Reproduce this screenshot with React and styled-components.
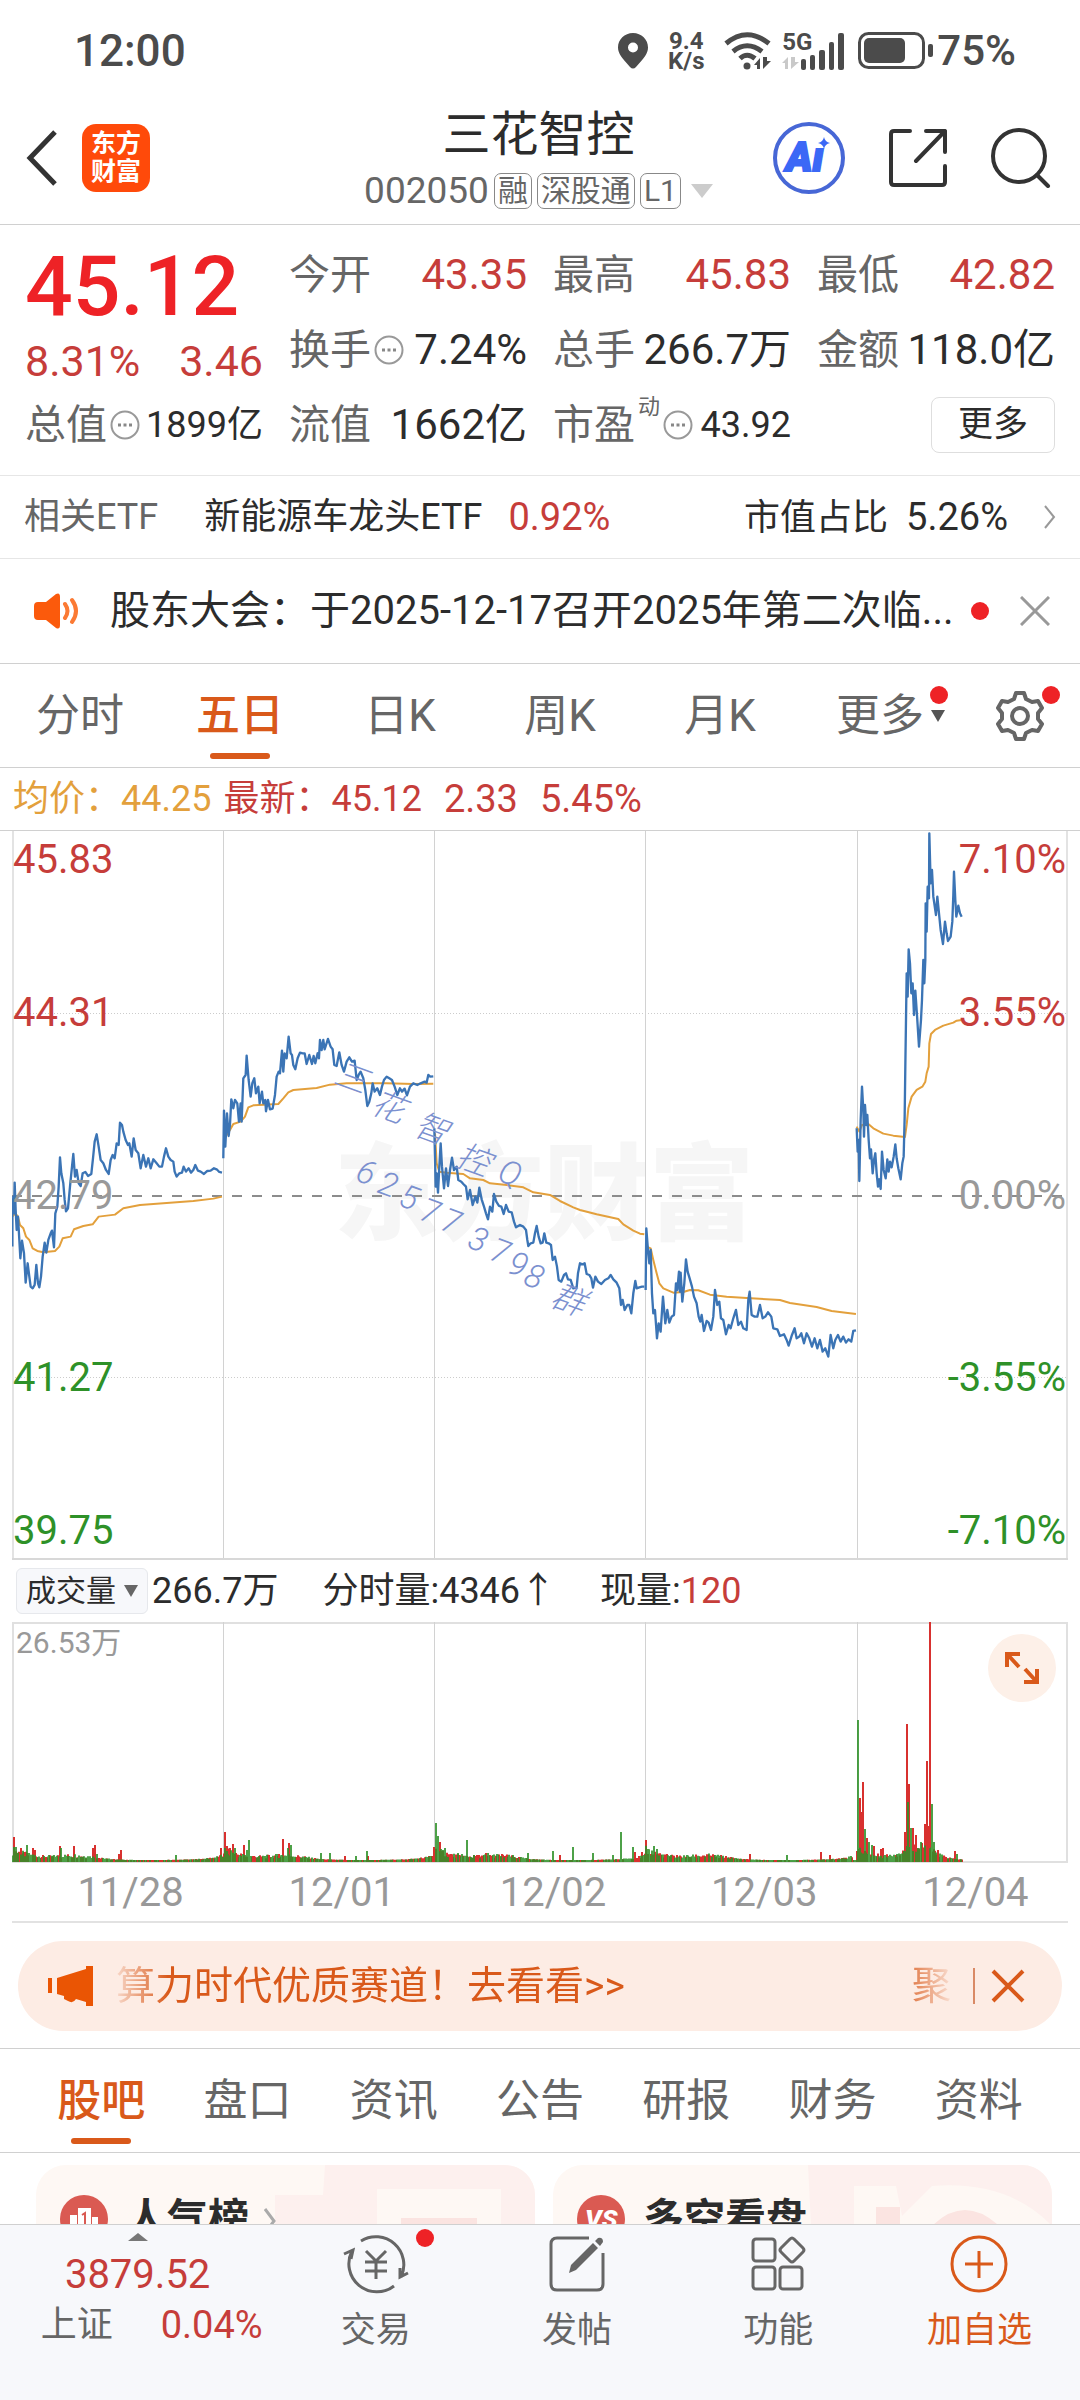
import React, { useState } from 'react'
import styled, { createGlobalStyle } from 'styled-components'

const c = {
    red: '#c63d3a',
    bright: '#ee2226',
    green: '#2e9128',
    orange: '#d9591a',
    avg: '#e3a03c',
    ink: '#2c2c2c',
    grey: '#666666',
    pale: '#999999',
    line: '#d0d0d0',
    bar: '#f7f8fb',
}

const quotes = [
    { label: '今开', value: '43.35', color: c.red },
    { label: '最高', value: '45.83', color: c.red },
    { label: '最低', value: '42.82', color: c.red },
    { label: '换手', value: '7.24%', info: true },
    { label: '总手', value: '266.7万' },
    { label: '金额', value: '118.0亿' },
    { label: '流值', value: '1662亿' },
    { label: '市盈', value: '43.92', info: true, sup: '动', small: true },
]

const periods = ['分时', '五日', '日K', '周K', '月K', '更多']
const sections = ['股吧', '盘口', '资讯', '公告', '研报', '财务', '资料']
const dates = ['11/28', '12/01', '12/02', '12/03', '12/04']

const prices = [
    { top: '4%', left: '45.83', right: '7.10%', color: c.red },
    { top: '25%', left: '44.31', right: '3.55%', color: c.red },
    { top: '50%', left: '42.79', right: '0.00%', color: c.pale },
    { top: '75%', left: '41.27', right: '-3.55%', color: c.green },
    { top: '96%', left: '39.75', right: '-7.10%', color: c.green },
]

// points are kept at three times the chart scale, x and y from each group's own origin
const trends = [
    {
        at: 'translate(-12 -11)',
        price: [
            '37,1280 37,1180 40,1130 42,1180 44,1088 47,1170 50,1230 54,1190 58,1260 61,1315 66,1262 72,1300 77,1388 83,1330 88,1370 92,1400 98,1405 104,1395 109,1335 114,1390 118,1402 123,1370 128,1310 134,1268 139,1298 145,1260 152,1240 156,1232 162,1282 166,1180 172,1160 176,1100 180,1012 184,1060 190,1090 194,1140 198,1174 204,1165 210,1100 216,1040 220,1002 225,1070 230,1050 236,1090 242,1098 248,1060 256,1056 264,1068 274,1062 279,1015 284,965 290,943 296,980 302,1020 310,1030 318,1050 326,1062 332,1020 338,1005 344,1015 350,970 356,975 360,908 366,915 370,935 377,960 384,975 388,970 395,1010 401,955 407,990 415,1000 422,1045 430,1005 438,1040 445,1015 452,1045 460,1018 470,1030 478,1040 486,1040 492,1010 498,985 505,1010 512,1020 520,1025 524,1055 530,1070 538,1060 546,1058 551,1040 558,1055 566,1045 573,1058 580,1050 586,1035 594,1052 602,1055 612,1062 622,1053 632,1052 642,1045 650,1048 658,1056 666,1058',
            '670,1015 672,872 676,980 681,880 686,948 690,915 694,838 700,865 705,840 712,850 717,905 722,850 725,905 730,775 737,765 740,707 746,780 752,830 757,790 763,775 768,820 775,800 779,850 786,815 790,850 796,840 798,874 804,840 810,868 818,866 825,825 830,770 836,755 840,760 846,692 850,755 854,700 860,715 866,650 872,700 876,705 880,735 886,748 893,715 900,698 908,700 914,700 920,732 928,705 936,732 941,708 946,730 953,700 957,715 960,660 965,690 970,660 974,688 984,657 992,680 998,688 1003,735 1010,738 1018,697 1025,735 1032,755 1040,725 1048,712 1056,725 1064,722 1070,780 1076,765 1082,755 1090,775 1096,810 1102,858 1108,845 1114,820 1118,790 1124,815 1132,805 1140,825 1146,800 1152,780 1160,770 1168,775 1176,780 1184,800 1192,825 1200,805 1206,815 1214,806 1221,826 1230,800 1240,790 1252,795 1262,790 1274,785 1280,788 1285,765 1291,770 1300,769',
        ],
        avg: [
            '37,1190 46,1180 54,1190 60,1215 70,1225 78,1250 88,1260 98,1285 112,1293 130,1297 165,1293 178,1280 188,1255 212,1250 222,1228 250,1218 278,1213 296,1190 345,1184 370,1165 420,1155 500,1149 580,1143 640,1136 666,1130',
            '672,960 680,945 690,930 700,912 722,905 735,890 745,862 760,856 835,852 850,835 865,817 880,810 950,804 990,794 1040,790 1100,790 1160,790 1240,792 1300,791',
        ],
    },
    {
        at: 'translate(408 169)',
        price: [
            '43,385 45,470 47,560 50,520 54,578 58,500 62,430 66,500 72,565 78,505 84,558 90,510 96,473 102,510 110,500 115,540 124,545 130,552 138,560 143,598 150,570 158,615 166,590 172,608 178,563 185,598 192,620 198,640 204,658 210,620 217,635 222,582 229,605 237,618 244,620 251,642 258,615 266,635 275,637 282,665 288,682 300,675 310,680 318,690 322,720 325,738 332,730 340,728 345,700 350,678 356,710 362,730 368,728 373,700 379,728 386,730 393,735 398,780 405,770 411,800 416,840 424,845 432,825 438,820 444,838 452,840 460,865 470,862 474,820 480,790 487,793 494,790 500,822 508,825 514,835 519,863 526,830 534,845 544,852 555,840 565,835 572,825 580,838 590,848 598,865 603,915 608,900 614,930 622,915 628,915 634,940 640,880 646,843 650,865 658,862 666,860 673,860',
            '677,870 679,685 684,750 688,790 692,750 696,880 700,940 705,930 711,1015 716,970 722,995 729,890 736,970 742,930 748,968 755,950 762,945 768,850 772,870 777,815 780,875 782,818 787,905 793,850 798,778 803,815 809,835 816,860 822,890 830,910 836,950 841,965 845,945 852,993 860,963 866,968 873,990 880,950 885,870 892,915 898,905 903,955 910,960 918,1003 926,975 932,985 940,955 948,930 955,975 963,965 970,985 980,990 985,900 989,875 995,945 1004,950 1012,950 1020,915 1028,955 1036,950 1044,937 1054,950 1060,985 1072,988 1080,1008 1092,1003 1100,1020 1106,1037 1116,1005 1124,985 1130,1015 1138,1010 1144,1000 1152,1030 1160,1000 1168,1015 1176,1040 1184,1015 1192,1045 1200,1020 1208,1055 1216,1045 1225,1070 1232,1005 1240,1045 1246,1020 1254,1005 1262,1025 1270,1010 1278,1028 1286,1018 1294,1025 1300,993 1308,991',
        ],
        avg: [
            '45,400 50,490 58,515 80,518 130,522 150,535 190,540 210,550 260,555 310,562 340,577 390,585 420,603 460,622 480,630 530,643 595,657 610,673 640,692 660,701 673,703',
            '680,740 692,745 700,780 710,820 718,850 730,865 760,878 790,876 810,870 835,871 870,884 920,890 980,894 1080,900 1110,909 1190,921 1235,933 1308,942',
        ],
    },
    {
        at: 'translate(808 -11)',
        price: [
            '110,925 113,995 116,960 118,1083 122,900 126,800 130,870 132,950 135,855 139,915 142,885 146,960 150,1015 153,988 158,1060 162,1020 166,1000 170,1060 174,1100 178,1078 182,1107 186,995 191,1050 197,1075 202,1018 206,1055 210,1025 215,1042 221,1010 226,973 230,1015 235,1045 242,1078 247,1030 251,1010 254,890 256,740 258,600 260,460 263,530 266,388 270,430 274,520 278,490 282,585 286,512 291,585 297,680 303,600 306,540 310,420 313,490 316,420 317,250 320,335 323,200 327,235 328,40 332,190 336,150 340,230 348,285 352,230 358,290 362,330 369,372 375,305 380,340 384,363 392,350 397,305 400,225 402,155 406,240 409,290 415,257 420,280 425,290',
        ],
        avg: [
            '110,920 118,935 126,915 145,912 160,925 190,941 220,947 255,951 260,915 265,865 275,830 290,810 307,800 316,785 320,760 326,740 328,670 333,642 345,630 370,617 400,608 410,602 425,600',
        ],
    },
]

// [x, height, up]
const spikes = [
    [1, 25, 1], [3, 15, 0], [8, 14, 1], [14, 17, 0], [20, 14, 1], [22, 12, 1], [47, 16, 1], [48, 14, 0], [61, 16, 1], [80, 14, 1], [82, 17, 1], [84, 8, 0],
    [106, 8, 1], [108, 12, 1], [163, 7, 0], [208, 14, 1], [212, 30, 1], [214, 16, 1], [217, 14, 1], [220, 18, 1], [222, 14, 0], [231, 17, 1], [234, 12, 0], [236, 22, 0],
    [266, 8, 1], [270, 23, 1], [275, 14, 0], [276, 19, 1], [278, 17, 0], [308, 9, 0], [317, 9, 0], [332, 6, 1], [343, 6, 0], [354, 11, 0], [355, 6, 1],
    [421, 15, 1], [423, 39, 0], [425, 26, 0], [427, 20, 1], [430, 12, 0], [432, 14, 0], [445, 9, 0], [449, 8, 0], [454, 22, 0], [461, 7, 1], [473, 9, 1], [475, 9, 0],
    [500, 7, 0], [515, 9, 0], [540, 11, 0], [547, 7, 1], [560, 15, 0], [580, 9, 0], [600, 7, 0], [608, 30, 0], [620, 15, 0], [622, 10, 1], [629, 10, 1],
    [633, 22, 1], [635, 13, 0], [641, 16, 0], [644, 13, 0], [647, 8, 1], [664, 7, 1], [674, 7, 0], [737, 8, 1], [774, 7, 0], [808, 10, 1], [817, 7, 1],
    [845, 142, 0], [847, 64, 1], [849, 50, 1], [850, 80, 1], [852, 33, 0], [854, 24, 1], [856, 20, 0], [859, 17, 0], [861, 16, 1], [868, 13, 1], [870, 14, 1], [884, 8, 0],
    [892, 30, 1], [894, 138, 1], [896, 78, 1], [895, 60, 0], [898, 34, 0], [900, 34, 1], [903, 27, 1], [905, 14, 0], [912, 38, 1], [914, 101, 1], [916, 36, 1],
    [917, 240, 1], [919, 58, 0], [921, 20, 0], [925, 12, 1], [942, 11, 1], [944, 8, 0],
]

const noise = (n) => {
    const v = Math.sin(n * 12.9898) * 43758.5453
    return v - Math.floor(v)
}

const volume = []
for (let x = 0; x < 950; x += 1) {
    const t = (x % 211) / 211
    const open = 13 * Math.exp(-t * 9)
    const mid = 5 * Math.exp(-Math.pow((t - 0.3) * 8, 2))
    const close = x < 840 ? 6 * Math.exp(-(1 - t) * 14) : 0
    const rally = x > 846 ? 11 * Math.exp(-Math.pow((x - 905) / 20, 2)) : 0
    volume.push([x, 2 + (open + mid + close + rally) * (0.35 + noise(x) * 0.75), noise(x + 7) > 0.5])
}

const bars = (up) => [...volume, ...spikes]
    .filter((b) => Boolean(b[2]) === up)
    .map(([x, h]) => `M${x + 1} 240V${(240 - h).toFixed(1)}`)
    .join('')

function Trend() {
    return (
        <svg viewBox='0 0 1056 729' width='100%' fill='none'>
            <text x='322' y='400' fontSize='105' fontWeight='900' fill='#f6f6f6'>东方财富</text>
            <path d='M0 182.500H1056M0 546.500H1056' stroke='#cccccc' strokeDasharray='1 2' />
            <path d='M1 0V728M1055 0V728' stroke='#e3e3e3' strokeWidth='2' />
            <path d='M211.5 0V728M422.5 0V728M633.5 0V728M845.5 0V728' stroke='#d2d2d2' />
            <path d='M0 728H1056' stroke='#d8d8d8' strokeWidth='2' />
            <path d='M0 365H1056' stroke='#8c8c8c' strokeWidth='2' strokeDasharray='10 10' />
            {trends.map((day) => (
                <g key={day.at} transform={`${day.at} scale(0.3333)`} strokeLinejoin='round'>
                    {day.avg.map((p) => <polyline key={p} points={p} stroke={c.avg} strokeWidth='6' />)}
                    {day.price.map((p) => <polyline key={p} points={p} stroke='#3b74b5' strokeWidth='7' />)}
                </g>
            ))}
            <g fontSize='33' fontWeight='300' fontStyle='italic' fill='#7b90cf'>
                <text x='320 357 400 442 484' y='252 281 303 334 349' rotate='20'>三花智控Q</text>
                <text x='342 364 385 406 427 454 476 494 510 537' y='349 361 374 388 398 416 428 441 453 474' rotate='20'>625773798群</text>
            </g>
        </svg>
    )
}

function Volume() {
    return (
        <svg viewBox='0 0 1056 241' width='100%' fill='none'>
            <path d='M1 240V1H1055V240' stroke='#e0e0e0' strokeWidth='2' />
            <path d='M0 240H1056' stroke='#e0e0e0' strokeWidth='2' />
            <path d='M211.5 0V240M422.5 0V240M633.5 0V240M845.5 0V240' stroke='#d2d2d2' />
            <path d={bars(true)} stroke='#d8312f' strokeWidth='2' />
            <path d={bars(false)} stroke='#2e9128' strokeOpacity='0.85' strokeWidth='2' />
        </svg>
    )
}

function Info() {
    return (
        <svg width='30' height='30' viewBox='0 0 30 30' fill='none'>
            <circle cx='15' cy='15' r='13.500' stroke='#999' strokeWidth='2' />
            <path d='M8 15h3M13.500 15h3M19 15h3' stroke='#888' strokeWidth='3' />
        </svg>
    )
}

function StatusBar() {
    return (
        <Status>
            <Clock>12:00</Clock>
            <svg width='30' height='36' viewBox='0 0 30 36'>
                <path fillRule='evenodd' fill='#4b4b4b' d='M15 0C6.500 0 0 6.500 0 14.500c0 6 4 10.500 12 19.500q3 3 6 0C26 25 30 20.500 30 14.500 30 6.500 23.500 0 15 0zm0 9.500a5 5 0 1 1 0 10 5 5 0 0 1 0-10z' />
            </svg>
            <Speed><span>9.4</span><span>K/s</span></Speed>
            <svg width='48' height='38' viewBox='0 0 48 38' fill='none' stroke='#4b4b4b' strokeWidth='5'>
                <path d='M2 11.500Q23 -6 45 11.500M9 19.500Q23 8 38 19.500M16 26.500Q23 20 31 26.500' />
                <circle cx='23' cy='34' r='3.500' fill='#4b4b4b' stroke='none' />
                <path d='M30 33l6-7v11h-3v-4zM39 25v12l8-8h-4v-4z' fill='#4b4b4b' stroke='none' />
            </svg>
            <Signal>
                <svg width='62' height='38' viewBox='0 0 62 38' fill='#4b4b4b'>
                    <path d='M0 31l6-6v12H3v-6zM9 25v12l8-7h-4v-5z' fill='#c9c9c9' />
                    <rect x='19' y='27' width='5' height='11' rx='2' />
                    <rect x='28' y='23' width='5' height='15' rx='2' />
                    <rect x='37' y='18' width='6' height='20' rx='2' />
                    <rect x='47' y='10' width='5' height='28' rx='2' />
                    <rect x='56' y='1' width='6' height='37' rx='2' />
                </svg>
                <span>5G</span>
            </Signal>
            <Battery>
                <svg width='75' height='38' viewBox='0 0 75 38' fill='none'>
                    <rect x='1.500' y='1.500' width='64' height='34' rx='9' stroke='#4b4b4b' strokeWidth='3' />
                    <rect x='6' y='6' width='41' height='25' rx='5' fill='#4b4b4b' />
                    <rect x='70' y='12' width='5' height='13' rx='2' fill='#4b4b4b' />
                </svg>
                75%
            </Battery>
        </Status>
    )
}

function TopBar() {
    return (
        <Header>
            <HeaderSide>
                <IconButton aria-label='返回'>
                    <svg width='32' height='56' viewBox='0 0 32 56' fill='none' stroke='#333' strokeWidth='5'>
                        <path d='M29 2L4 28l25 26' />
                    </svg>
                </IconButton>
                <Logo href='#home'>东方<br />财富</Logo>
            </HeaderSide>
            <Heading>
                <h1>三花智控</h1>
                <Code>
                    002050
                    <Tag>融</Tag><Tag>深股通</Tag><Tag>L1</Tag>
                    <svg width='22' height='14' viewBox='0 0 22 14'><path d='M0 0h22L11 14z' fill='#ccc' /></svg>
                </Code>
            </Heading>
            <HeaderSide $end>
                <IconButton aria-label='Ai'>
                    <svg width='72' height='72' viewBox='0 0 72 72' fill='none'>
                        <circle cx='36' cy='36' r='34' stroke='#4767d6' strokeWidth='4' />
                        <text x='13' y='49' fontSize='40' fontWeight='900' fontStyle='italic' fill='#3b68f6' stroke='#3b68f6' strokeWidth='2'>Aı</text>
                        <path d='M51 15q1 5 6 6-5 1-6 6-1-5-6-6 5-1 6-6z' fill='#3b68f6' />
                    </svg>
                </IconButton>
                <IconButton aria-label='分享'>
                    <svg width='58' height='58' viewBox='0 0 58 58' fill='none' stroke='#333' strokeWidth='4' strokeLinecap='round' strokeLinejoin='round'>
                        <path d='M21 2H5Q2 2 2 5v48q0 3 3 3h48q3 0 3-3V37M37 2h19v21M56 2L27 32' />
                    </svg>
                </IconButton>
                <IconButton aria-label='搜索'>
                    <svg width='60' height='60' viewBox='0 0 60 60' fill='none' stroke='#333' strokeWidth='4' strokeLinecap='round'>
                        <circle cx='28' cy='28' r='26' /><path d='M46 47l11 11' />
                    </svg>
                </IconButton>
            </HeaderSide>
        </Header>
    )
}

function QuoteItem({ label, value, info, sup, small, color }) {
    return (
        <Item>
            <dt>{label}{sup && <sup>{sup}</sup>}{info && <Info />}</dt>
            <Value $color={color} $small={small}>{value}</Value>
        </Item>
    )
}

function Quote() {
    return (
        <QuoteGrid>
            <Lead>
                <strong>45.12</strong>
                <p><span>8.31%</span><span>3.46</span></p>
            </Lead>
            {quotes.slice(0, 6).map((q) => <QuoteItem key={q.label} {...q} />)}
            <QuoteItem label='总值' value='1899亿' info small />
            {quotes.slice(6).map((q) => <QuoteItem key={q.label} {...q} />)}
            <MoreButton>更多</MoreButton>
        </QuoteGrid>
    )
}

function BottomBar() {
    return (
        <Bottom>
            <IndexButton>
                <svg width='20' height='8' viewBox='0 0 20 8'><path d='M10 0l10 8H0z' fill='#777' /></svg>
                <b>3879.52</b>
                <p>上证<span>0.04%</span></p>
            </IndexButton>
            <NavButton>
                <svg width='66' height='60' viewBox='0 0 66 60' fill='none' stroke='#666' strokeWidth='3'>
                    <path d='M18 7A28 28 0 0 1 58 43M65 39l-8 4V34M51 52A28 28 0 0 1 9 17M1 20l9-4-2 9' />
                    <path d='M23 17l10 10 10-10M33 27v18M22 28h22M22 37h22' />
                </svg>
                <Dot $x='40px' $y='4px' />
                交易
            </NavButton>
            <NavButton>
                <svg width='60' height='60' viewBox='0 0 60 60' fill='none' stroke='#666' strokeWidth='3'>
                    <path d='M42 4H10q-6 0-6 6v40q0 6 6 6h40q6 0 6-6V19' />
                    <path d='M22 39l2-8 22-22 5 5-22 22zM48 7l3-3q5-1 5 4l-3 4z' fill='#666' stroke='none' />
                </svg>
                发帖
            </NavButton>
            <NavButton>
                <svg width='60' height='60' viewBox='0 0 60 60' fill='none' stroke='#666' strokeWidth='3'>
                    <rect x='5' y='5' width='22' height='22' rx='3' />
                    <rect x='5' y='33' width='22' height='22' rx='3' />
                    <rect x='32' y='33' width='22' height='22' rx='3' />
                    <path d='M42 5q2-2 4 0l9 9q2 2 0 4l-9 9q-2 2-4 0l-9-9q-2-2 0-4z' />
                </svg>
                功能
            </NavButton>
            <NavButton $active>
                <svg width='60' height='60' viewBox='0 0 60 60' fill='none' stroke={c.orange} strokeWidth='3'>
                    <circle cx='30' cy='30' r='27' /><path d='M30 17v27M16 30h28' />
                </svg>
                加自选
            </NavButton>
        </Bottom>
    )
}

function App() {
    const [period, setPeriod] = useState('五日')
    const [section, setSection] = useState('股吧')

    return (
        <Page>
            <GlobalStyle />
            <Content>
                <StatusBar />
                <TopBar />
                <Quote />
                <EtfRow href='#etf'>
                    <span className='muted'>相关ETF</span>
                    <span>新能源车龙头ETF</span>
                    <em>0.92%</em>
                    <span className='share'>市值占比<b>5.26%</b></span>
                    <svg width='12' height='24' viewBox='0 0 12 24' fill='none' stroke='#999' strokeWidth='2'><path d='M1 1l9 11L1 23' /></svg>
                </EtfRow>
                <News>
                    <svg width='46' height='36' viewBox='0 0 46 36' fill='#fb5a0c'>
                        <path d='M4 9h8L22 1q4-2 4 3v28q0 5-4 3l-10-8H4q-4 0-4-4V13q0-4 4-4z' />
                        <path d='M31 11q5 7 0 14M38 7q8 11 0 22' fill='none' stroke='#fb7a34' strokeWidth='4' strokeLinecap='round' />
                    </svg>
                    <p>股东大会：于2025-12-17召开2025年第二次临...</p>
                    <i />
                    <IconButton aria-label='关闭'>
                        <svg width='30' height='30' viewBox='0 0 30 30' fill='none' stroke='#999' strokeWidth='3'><path d='M1 1l28 28M29 1L1 29' /></svg>
                    </IconButton>
                </News>
                <Tabs>
                    {periods.map((p) => (
                        <Tab key={p} $active={p === period} onClick={() => setPeriod(p)}>
                            {p}
                            {p === '更多' && <Caret viewBox='0 0 14 12'><path d='M0 0h14L7 12z' fill='#555' /></Caret>}
                            {p === '更多' && <Dot $x='50px' $y='22px' />}
                        </Tab>
                    ))}
                    <Settings aria-label='设置'>
                        <svg width='52' height='52' viewBox='0 0 52 52' fill='none' stroke='#666' strokeWidth='4' strokeLinejoin='round'>
                            <path d='M22 3h8l2 6 6 3 6-1 4 7-4 5v6l4 5-4 7-6-1-6 3-2 6h-8l-2-6-6-3-6 1-4-7 4-5v-6l-4-5 4-7 6 1 6-3z' />
                            <circle cx='26' cy='26' r='8' />
                        </svg>
                        <Dot $x='22px' $y='22px' />
                    </Settings>
                </Tabs>
                <Legend>
                    <span className='avg'>均价：44.25</span>
                    <span>最新：45.12</span><span className='gap'>2.33</span><span className='gap'>5.45%</span>
                </Legend>
                <Chart>
                    <Trend />
                    {prices.map((p) => (
                        <AxisRow key={p.left} $top={p.top} $color={p.color}>
                            <span>{p.left}</span><span>{p.right}</span>
                        </AxisRow>
                    ))}
                </Chart>
                <VolumeHead>
                    <button>成交量<svg width='14' height='12' viewBox='0 0 14 12'><path d='M0 0h14L7 12z' fill='#666' /></svg></button>
                    <span>266.7万</span>
                    <span className='next'>分时量:4346↑</span>
                    <span className='next'>现量:<em>120</em></span>
                </VolumeHead>
                <Chart>
                    <Volume />
                    <Peak>26.53万</Peak>
                    <Expand aria-label='全屏'>
                        <svg width='36' height='36' viewBox='0 0 36 36' fill='none' stroke={c.orange} strokeWidth='4'>
                            <path d='M3 17V4h13M4 5l11 12M33 19v13H20M32 31L21 19' />
                        </svg>
                    </Expand>
                </Chart>
                <Dates>{dates.map((d) => <span key={d}>{d}</span>)}</Dates>
                <Banner>
                    <svg width='46' height='40' viewBox='0 0 46 40' fill='#ea5504'>
                        <path d='M0 12h4v15H0zM9 12L38 3V0h7v40h-7v-4l-10-3q-3 5-8 2l-4-2v-3l-7-2z' />
                    </svg>
                    <a href='#promo'><span>算力时代优质赛道！去看看&gt;&gt;</span><span>聚</span></a>
                    <hr />
                    <IconButton aria-label='关闭广告'>
                        <svg width='34' height='34' viewBox='0 0 34 34' fill='none' stroke={c.orange} strokeWidth='4'><path d='M2 2l30 30M32 2L2 32' /></svg>
                    </IconButton>
                </Banner>
                <Tabs $inset>
                    {sections.map((s) => (
                        <Tab key={s} $active={s === section} onClick={() => setSection(s)}>{s}</Tab>
                    ))}
                </Tabs>
                <Cards>
                    <Card href='#rank'>
                        <Backdrop viewBox='0 0 500 120' preserveAspectRatio='xMaxYMin slice'>
                            <path d='M290 0H500V120H240V30H288z' fill='#fdf0ee' />
                            <path d='M342 24H466V120H342z' fill='#fef8f4' />
                            <path d='M366 53H442V120H366z' fill='#fbe4e1' />
                        </Backdrop>
                        <svg width='48' height='48' viewBox='0 0 48 48'>
                            <circle cx='24' cy='24' r='24' fill='#da5a52' />
                            <path d='M10 20h7v18h-7zM18 13h13v25H18zM32 22h6v16h-6z' fill='#fff' />
                            <path d='M22 20l3-2v15' fill='none' stroke='#da5a52' strokeWidth='2' />
                        </svg>
                        <h2>人气榜</h2>
                        <svg width='14' height='28' viewBox='0 0 14 28' fill='none' stroke='#aaa' strokeWidth='3'><path d='M2 2l9 12-9 12' /></svg>
                    </Card>
                    <Card href='#versus'>
                        <Backdrop viewBox='0 0 500 120' preserveAspectRatio='xMaxYMin slice'>
                            <path d='M256 0H500V120H262z' fill='#fdf0ee' />
                            <path d='M302 21h42l6 30 30-30q76-6 120 40v59H302z' fill='#fef8f4' />
                            <path d='M324 42h24v78h-24zM372 70q40-50 84 0v50h-84z' fill='#fbe4e1' />
                        </Backdrop>
                        <svg width='48' height='48' viewBox='0 0 48 48'>
                            <circle cx='24' cy='24' r='24' fill='#da5a52' />
                            <text x='8' y='33' fontSize='26' fontWeight='900' fontStyle='italic' fill='#fff'>VS</text>
                        </svg>
                        <h2>多空看盘</h2>
                    </Card>
                </Cards>
            </Content>
            <BottomBar />
        </Page>
    )
}

const GlobalStyle = createGlobalStyle`
*{
    box-sizing:border-box;
}
body, h1, h2, p, dl, dt, dd{
    margin:0;
}
body{
    background-color:white;
    color:${c.ink};
    font-family:Roboto, "Noto Sans CJK SC", sans-serif;
    font-size:36px;
    line-height:48px;
}
button{
    margin:0;
    padding:0;
    border:none;
    background:none;
    color:inherit;
    font:inherit;
    cursor:pointer;
}
a{
    color:inherit;
    text-decoration:none;
}
em, i{
    font-style:normal;
}
svg{
    display:block;
    flex:none;
}
`
const Page = styled.div`
    display:flex;
    flex-direction:column;
    height:100vh;
`
const Content = styled.main`
    flex:1;
    min-height:0;
    overflow:hidden;
`
const Status = styled.div`
    display:flex;
    align-items:center;
    height:102px;
    padding:0 64px 0 74px;
    color:#4b4b4b;
    font-weight:500;
`
const Clock = styled.span`
    flex:1;
    font-size:44px;
`
const Speed = styled.div`
    display:flex;
    flex-direction:column;
    align-items:center;
    width:40px;
    margin:0 18px;
    font-size:24px;
    font-weight:700;
    line-height:20px;
`
const Signal = styled.div`
    position:relative;
    margin:0 14px 0 10px;
    span{
        position:absolute;
        top:0;
        left:0;
        font-size:24px;
        font-weight:700;
        line-height:20px;
    }
`
const Battery = styled.div`
    display:flex;
    align-items:center;
    gap:4px;
    font-size:42px;
`
const Header = styled.header`
    display:grid;
    grid-template-columns:1fr auto 1fr;
    align-items:center;
    height:123px;
    padding:0 29px 0 26px;
    border-bottom:1px solid ${c.line};
`
const HeaderSide = styled.div`
    display:flex;
    align-items:center;
    gap:${(p) => (p.$end ? '44px' : '24px')};
    justify-content:${(p) => (p.$end ? 'flex-end' : 'flex-start')};
    padding-bottom:10px;
`
const IconButton = styled.button`
    flex:none;
`
const Logo = styled.a`
    display:flex;
    align-items:center;
    justify-content:center;
    width:68px;
    height:68px;
    border-radius:14px;
    background-color:#ff4a0a;
    color:white;
    font-size:25px;
    font-weight:700;
    line-height:28px;
`
const Heading = styled.div`
    display:flex;
    flex-direction:column;
    align-items:center;
    padding-bottom:4px;
    h1{
        font-size:48px;
        font-weight:400;
        line-height:60px;
    }
`
const Code = styled.div`
    display:flex;
    align-items:center;
    gap:5px;
    color:${c.grey};
    font-size:37px;
    line-height:52px;
    svg{
        margin-left:5px;
    }
`
const Tag = styled.span`
    height:36px;
    padding:0 3px;
    border:1px solid #888;
    border-radius:7px;
    font-size:30px;
    line-height:34px;
`
const QuoteGrid = styled.dl`
    display:grid;
    grid-template-columns:repeat(4, 1fr);
    grid-auto-rows:75px;
    column-gap:26px;
    padding:12px 25px 13px;
    border-bottom:1px solid #e6e6e6;
`
const Lead = styled.div`
    grid-row:span 2;
    color:${c.red};
    strong{
        display:block;
        padding-top:6px;
        color:${c.bright};
        font-size:84px;
        font-weight:500;
        line-height:88px;
    }
    p{
        display:flex;
        justify-content:space-between;
        font-size:43px;
        line-height:60px;
    }
`
const Item = styled.div`
    display:flex;
    align-items:center;
    justify-content:space-between;
    white-space:nowrap;
    dt{
        display:flex;
        align-items:center;
        gap:3px;
        color:${c.grey};
        font-size:41px;
        line-height:60px;
    }
    sup{
        align-self:flex-start;
        font-size:22px;
        line-height:24px;
    }
`
const Value = styled.dd`
    color:${(p) => p.$color || c.ink};
    font-size:${(p) => (p.$small ? '36px' : '42px')};
    line-height:60px;
`
const MoreButton = styled.button`
    align-self:center;
    justify-self:end;
    width:124px;
    height:56px;
    border:1px solid #dedede;
    border-radius:8px;
    font-size:35px;
`
const EtfRow = styled.a`
    display:flex;
    align-items:center;
    height:83px;
    padding:0 24px;
    border-bottom:1px solid #e6e6e6;
    .muted{
        margin-right:46px;
        color:${c.grey};
    }
    em{
        margin-left:26px;
        color:${c.red};
        font-size:38px;
    }
    b{
        margin-left:18px;
        font-size:38px;
        font-weight:400;
    }
    .share{
        margin-left:auto;
        margin-right:36px;
    }
`
const News = styled.div`
    display:flex;
    align-items:center;
    height:105px;
    padding:0 30px 0 34px;
    border-bottom:1px solid ${c.line};
    p{
        flex:1;
        margin-left:30px;
        font-size:40px;
        white-space:nowrap;
    }
    i{
        width:18px;
        height:18px;
        margin-right:31px;
        border-radius:50%;
        background-color:${c.bright};
    }
`
const Tabs = styled.nav`
    display:flex;
    height:${(p) => (p.$inset ? '105px' : '104px')};
    padding:${(p) => (p.$inset ? '0 28px' : '0')};
    border-top:${(p) => (p.$inset ? '1px' : '0')} solid ${c.line};
    border-bottom:1px solid ${c.line};
`
const Tab = styled.button`
    position:relative;
    flex:4;
    color:${(p) => (p.$active ? c.orange : c.grey)};
    font-size:44px;
    font-weight:${(p) => (p.$active ? 500 : 400)};
    &::after{
        content:'';
        display:${(p) => (p.$active ? 'block' : 'none')};
        position:absolute;
        left:50%;
        bottom:8px;
        width:60px;
        height:6px;
        margin-left:-30px;
        border-radius:3px;
        background-color:${c.orange};
    }
`
const Caret = styled.svg`
    position:absolute;
    left:calc(50% + 51px);
    top:46px;
    width:14px;
    height:12px;
`
const Settings = styled.button`
    position:relative;
    display:flex;
    flex:3;
    align-items:center;
    justify-content:center;
`
const Dot = styled.i`
    position:absolute;
    left:calc(50% + ${(p) => p.$x});
    top:${(p) => p.$y};
    width:18px;
    height:18px;
    border-radius:50%;
    background-color:${c.bright};
`
const Legend = styled.div`
    display:flex;
    align-items:center;
    height:63px;
    padding-left:13px;
    border-bottom:1px solid ${c.line};
    color:${c.red};
    .avg{
        margin-right:12px;
        color:${c.avg};
    }
    .gap{
        margin-left:22px;
        font-size:38px;
    }
`
const Chart = styled.div`
    position:relative;
    margin:0 12px;
`
const AxisRow = styled.div`
    position:absolute;
    top:${(p) => p.$top};
    left:0;
    right:0;
    display:flex;
    justify-content:space-between;
    padding:0 2px 0 1px;
    color:${(p) => p.$color};
    font-size:40px;
    line-height:48px;
    transform:translateY(-50%);
`
const VolumeHead = styled.div`
    display:flex;
    align-items:center;
    height:62px;
    padding-left:16px;
    button{
        display:flex;
        align-items:center;
        gap:8px;
        height:46px;
        margin-right:4px;
        padding:0 9px;
        border:1px solid #e6e8ec;
        border-radius:6px;
        background-color:${c.bar};
        font-size:30px;
        line-height:44px;
    }
    .next{
        margin-left:44px;
    }
    em{
        color:${c.red};
    }
`
const Peak = styled.span`
    position:absolute;
    top:3px;
    left:4px;
    color:${c.pale};
    font-size:30px;
    line-height:36px;
`
const Expand = styled.button`
    position:absolute;
    top:12px;
    right:12px;
    display:flex;
    align-items:center;
    justify-content:center;
    width:68px;
    height:68px;
    border-radius:50%;
    background-color:#fdf0e8;
`
const Dates = styled.div`
    display:grid;
    grid-template-columns:repeat(5, 1fr);
    height:60px;
    margin:0 12px;
    border-bottom:2px solid #e2e2e2;
    color:${c.pale};
    font-size:40px;
    line-height:60px;
    text-align:center;
    span{
        padding-left:26px;
    }
`
const Banner = styled.aside`
    display:flex;
    align-items:center;
    height:90px;
    margin:18px 18px 17px;
    padding:0 37px 0 30px;
    border-radius:45px;
    background-color:#fdece4;
    color:${c.orange};
    a{
        display:flex;
        flex:1;
        justify-content:space-between;
        margin:0 16px 0 14px;
        padding:0 6px 0 8px;
        font-size:39px;
        mask-image:linear-gradient(90deg, transparent, #000 60px, #000 calc(100% - 60px), transparent);
    }
    hr{
        width:2px;
        height:36px;
        margin:0 16px 0 0;
        border:none;
        background-color:#d98a66;
    }
`
const Cards = styled.div`
    display:grid;
    grid-template-columns:1fr 1fr;
    gap:18px;
    padding:12px 28px 0 36px;
`
const Card = styled.a`
    position:relative;
    display:flex;
    align-items:flex-start;
    height:180px;
    padding:30px 24px;
    border-radius:30px;
    overflow:hidden;
    background-color:#fef8f4;
    svg{
        position:relative;
    }
    h2{
        position:relative;
        margin:0 14px 0 18px;
        font-size:41px;
        font-weight:700;
        line-height:48px;
    }
    h2 + svg{
        margin-top:12px;
    }
`
const Backdrop = styled.svg`
    &&{
        position:absolute;
    }
    top:0;
    right:0;
    width:100%;
    height:120px;
`
const Bottom = styled.nav`
    display:grid;
    grid-template-columns:275fr repeat(4, 201fr);
    height:176px;
    border-top:1px solid ${c.line};
    background-color:${c.bar};
`
const IndexButton = styled.button`
    display:flex;
    flex-direction:column;
    align-items:center;
    padding-top:8px;
    color:${c.red};
    b{
        margin:10px 0 2px;
        font-size:40px;
        font-weight:400;
    }
    p{
        display:flex;
        gap:48px;
        padding-left:28px;
        color:${c.grey};
    }
    span{
        color:${c.red};
        font-size:38px;
    }
`
const NavButton = styled.button`
    position:relative;
    display:flex;
    flex-direction:column;
    align-items:center;
    gap:12px;
    padding-top:9px;
    color:${(p) => (p.$active ? c.orange : c.grey)};
    font-size:35px;
    line-height:50px;
`
export default App
